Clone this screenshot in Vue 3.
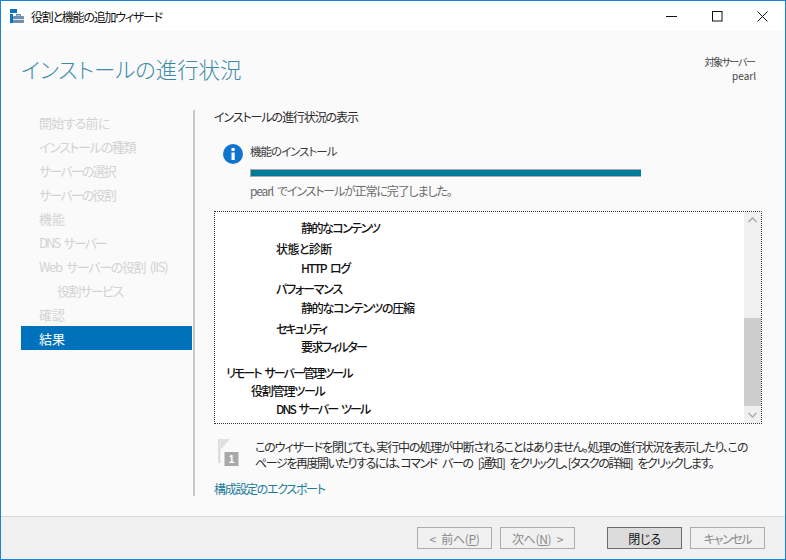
<script setup>
const steps = [
  { t: '開始する前に', ls: -0.7 }, { t: 'インストールの種類', ls: -1.3 }, { t: 'サーバーの選択', ls: -1.8 }, { t: 'サーバーの役割', ls: -1.8 },
  { t: '機能', ls: 0 }, { t: 'DNS サーバー', ls: -1.9 }, { t: 'Web サーバーの役割 (IIS)', ls: -1.35 }, { t: '役割サービス', ls: -1.5, sub: true },
  { t: '確認', ls: 0 }, { t: '結果', ls: 0, active: true }
]
const rows = [
  { t: '静的なコンテンツ', l: 4, gap: 0, ls: -1.5 },
  { t: '状態と診断', l: 3, gap: 3, ls: -0.6 },
  { t: 'HTTP ログ', l: 4, gap: 1, ls: -1.6 },
  { t: 'パフォーマンス', l: 3, gap: 3, ls: -1.2 },
  { t: '静的なコンテンツの圧縮', l: 4, gap: 1, ls: -1.2 },
  { t: 'セキュリティ', l: 3, gap: 3, ls: -2 },
  { t: '要求フィルター', l: 4, gap: 0, ls: -1.6 },
  { t: 'リモート サーバー管理ツール', l: 1, gap: 8, ls: -1.9 },
  { t: '役割管理ツール', l: 2, gap: 0, ls: -1.2 },
  { t: 'DNS サーバー ツール', l: 3, gap: 0, ls: -1.9 }
]
</script>

<template>
  <div class="win">
    <div class="titlebar">
      <svg class="appicon" width="16" height="15" viewBox="0 0 16 15">
        <rect x="0" y="0" width="7" height="4" fill="#0f74c0" />
        <rect x="0" y="5" width="3" height="9" fill="#0f74c0" />
        <rect x="3" y="7" width="11" height="7" rx="1" fill="#6d8fae" />
        <rect x="3" y="10" width="11" height="1" fill="#dfe6ec" />
        <rect x="6.5" y="5.5" width="4" height="1.5" fill="none" stroke="#6d8fae" />
      </svg>
      <span class="wintitle">役割と機能の追加ウィザード</span>
      <div class="controls">
        <svg width="11" height="11" viewBox="0 0 11 11"><path d="M0 5.5H11" stroke="#111" /></svg>
        <svg width="11" height="11" viewBox="0 0 11 11"><rect x="0.5" y="0.5" width="9.5" height="9.5" fill="none" stroke="#111" /></svg>
        <svg width="11" height="11" viewBox="0 0 11 11"><path d="M0.5 0.5L10.5 10.5M10.5 0.5L0.5 10.5" stroke="#111" /></svg>
      </div>
    </div>

    <div class="main">
      <div class="head">
        <h1>インストールの進行状況</h1>
        <div class="target">
          <div class="target-label">対象サーバー</div>
          <div>pearl</div>
        </div>
      </div>

      <div class="cols">
        <nav class="nav">
          <div
            v-for="s in steps"
            :key="s.t"
            class="step"
            :class="{ sub: s.sub, active: s.active }"
            :style="{ letterSpacing: s.ls + 'px' }"
          >{{ s.t }}</div>
        </nav>

        <section class="content">
          <div class="subhead">インストールの進行状況の表示</div>

          <div class="status">
            <svg class="info" width="20" height="20" viewBox="0 0 20 20">
              <circle cx="10" cy="10" r="10" fill="#0f74cc" />
              <rect x="8.5" y="4" width="3.2" height="3" fill="#fff" />
              <rect x="8.5" y="8.5" width="3.2" height="7.5" fill="#fff" />
            </svg>
            <div class="statusbody">
              <div class="statustitle">機能のインストール</div>
              <div class="bar"></div>
              <div class="statusmsg">pearl でインストールが正常に完了しました。</div>
            </div>
          </div>

          <div class="listbox">
            <div class="rows">
              <div
                v-for="r in rows"
                :key="r.t"
                class="row"
                :class="['lv' + r.l, 'gap' + r.gap]"
                :style="{ letterSpacing: r.ls + 'px' }"
              >{{ r.t }}</div>
            </div>
            <div class="scroll">
              <svg width="17" height="17" viewBox="0 0 17 17"><path d="M4.5 10L8.5 6L12.5 10" fill="none" stroke="#a8a8a8" stroke-width="1.3" /></svg>
              <div class="track"><div class="thumb"></div></div>
              <svg width="17" height="17" viewBox="0 0 17 17"><path d="M4.5 7L8.5 11L12.5 7" fill="none" stroke="#a8a8a8" stroke-width="1.3" /></svg>
            </div>
          </div>

          <div class="note">
            <svg class="flag" width="22" height="27" viewBox="0 0 22 27">
              <rect x="0" y="0" width="2.5" height="24" fill="#dedede" />
              <path d="M2.5 0L12 0L2.5 11Z" fill="#e0e0e0" />
              <rect x="6.5" y="13" width="14" height="14" fill="#a8a8a8" />
              <text x="13.5" y="24" font-size="10" fill="#fff" text-anchor="middle" font-family="Liberation Sans" font-weight="bold">1</text>
            </svg>
            <p><span class="l1">このウィザードを閉じても、実行中の処理が中断されることはありません。処理の進行状況を表示したり、この</span><br /><span class="l2">ページを再度開いたりするには、コマンド バーの [通知] をクリックし、[タスクの詳細] をクリックします。</span></p>
          </div>

          <a class="export">構成設定のエクスポート</a>
        </section>
      </div>
    </div>

    <div class="footer">
      <button class="btn dis"><span>&lt; 前へ(<u>P</u>)</span></button>
      <button class="btn dis next"><span>次へ(<u>N</u>) &gt;</span></button>
      <button class="btn primary"><span>閉じる</span></button>
      <button class="btn dis cancel"><span>キャンセル</span></button>
    </div>
  </div>
</template>

<style scoped>
.win {
  box-sizing: border-box;
  width: 786px;
  height: 560px;
  border: 1px solid #1883d7;
  display: flex;
  flex-direction: column;
  background: #fff;
  font-family: "Noto Sans CJK JP", "Noto Sans", sans-serif;
  font-size: 12px;
  font-feature-settings: "palt";
  color: #2b2b2b;
  overflow: hidden;
}
.titlebar {
  height: 30px;
  flex: none;
  display: flex;
  align-items: center;
  padding-left: 9px;
  background: #fff;
}
.appicon { margin-right: 5px; }
.wintitle { font-size: 12px; letter-spacing: -1.25px; color: #111; }
.controls {
  margin-left: auto;
  display: flex;
  gap: 34.5px;
  padding-right: 17px;
}
.controls svg { display: block; }
.main {
  flex: 1;
  min-height: 0;
  background: #fafafa;
  display: flex;
  flex-direction: column;
  border-bottom: 1px solid #d9d9d9;
}
.head {
  height: 79px;
  flex: none;
  display: flex;
  justify-content: space-between;
  padding: 0 29px 0 20px;
}
h1 {
  margin: 19px 0 0;
  font-size: 21.4px;
  line-height: 38px;
  font-weight: 300;
  color: #3c8aa9;
}
.target {
  margin-top: 24px;
  text-align: right;
  font-size: 10px;
  line-height: 14px;
  color: #444;
}
.target-label { letter-spacing: -1.4px; padding-right: 1.5px; }
.cols { flex: 1; display: flex; min-height: 0; }
.nav { width: 171px; margin-left: 20px; flex: none; }
.step {
  height: 24px;
  line-height: 25px;
  padding-left: 18px;
  color: #d3d3d3;
  font-size: 13px;
  word-spacing: 3px;
}
.step.sub { padding-left: 36px; }
.step.active { background: #0072bc; color: #fff; }
.content {
  margin-left: 1px;
  width: 568px;
  height: 386px;
  border-left: 2px solid #c8c8c8;
  padding-left: 19px;
  box-sizing: border-box;
}
.subhead { font-size: 12px; letter-spacing: -1.1px; line-height: 16px; margin-top: -1px; }
.status { display: flex; margin: 17px 0 0 9px; }
.info { flex: none; margin-top: 2px; }
.statusbody { margin-left: 7px; }
.statustitle { line-height: 18px; font-size: 11.5px; letter-spacing: -1px; color: #3a3a3a; }
.bar {
  box-sizing: border-box;
  width: 391px;
  height: 8px;
  margin-top: 9px;
  background: #007a99;
  border: 1px solid #aaa;
  border-right: 0;
}
.statusmsg { margin-top: 5px; line-height: 18px; letter-spacing: -1.15px; word-spacing: 2.5px; color: #6b6b6b; }
.listbox {
  box-sizing: border-box;
  margin-top: 11px;
  width: 548px;
  height: 213px;
  border: 1px dotted #333;
  background: #fff;
  display: flex;
  overflow: hidden;
}
.rows { flex: 1; padding-top: 7px; word-spacing: 3px; }
.row { line-height: 18px; font-weight: 500; color: #111; }
.lv1 { padding-left: 11px; }
.lv2 { padding-left: 36px; }
.lv3 { padding-left: 61px; }
.lv4 { padding-left: 86px; }
.gap1 { margin-top: 1px; }
.gap3 { margin-top: 3px; }
.gap8 { margin-top: 8px; }
.scroll {
  width: 17px;
  flex: none;
  background: #f0f0f0;
  display: flex;
  flex-direction: column;
}
.scroll svg { display: block; flex: none; }
.track { flex: 1; display: flex; flex-direction: column; justify-content: flex-end; }
.thumb { height: 88px; background: #cdcdcd; }
.note { display: flex; margin-top: 15px; margin-left: 4px; }
.flag { flex: none; margin-top: 0; }
.note p {
  margin: 0 0 0 15px;
  white-space: nowrap;
  line-height: 16px;
  color: #2b2b2b;
}
.l1 { letter-spacing: -1.12px; }
.l2 { letter-spacing: -1.42px; word-spacing: 4px; }
.export {
  display: block;
  margin-top: 10px;
  color: #1c7a9c;
  line-height: 16px;
  letter-spacing: -1.3px;
}
.footer {
  height: 42px;
  flex: none;
  background: #f0f0f0;
  display: flex;
  align-items: flex-start;
  padding: 10px 0 0 416px;
  box-sizing: border-box;
}
.btn {
  box-sizing: border-box;
  width: 75px;
  height: 22px;
  margin-right: 8px;
  padding: 0;
  border: 1px solid #adadad;
  background: #f0f0f0;
  font: inherit;
  font-feature-settings: "palt";
  letter-spacing: -0.3px;
  word-spacing: 3px;
  color: #8a8a8a;
}
.btn.next { margin-right: 32px; }
.btn.primary { background: #dcdcdc; border-color: #6b6b6b; color: #111; }
.btn.cancel { letter-spacing: -1.4px; }
</style>
